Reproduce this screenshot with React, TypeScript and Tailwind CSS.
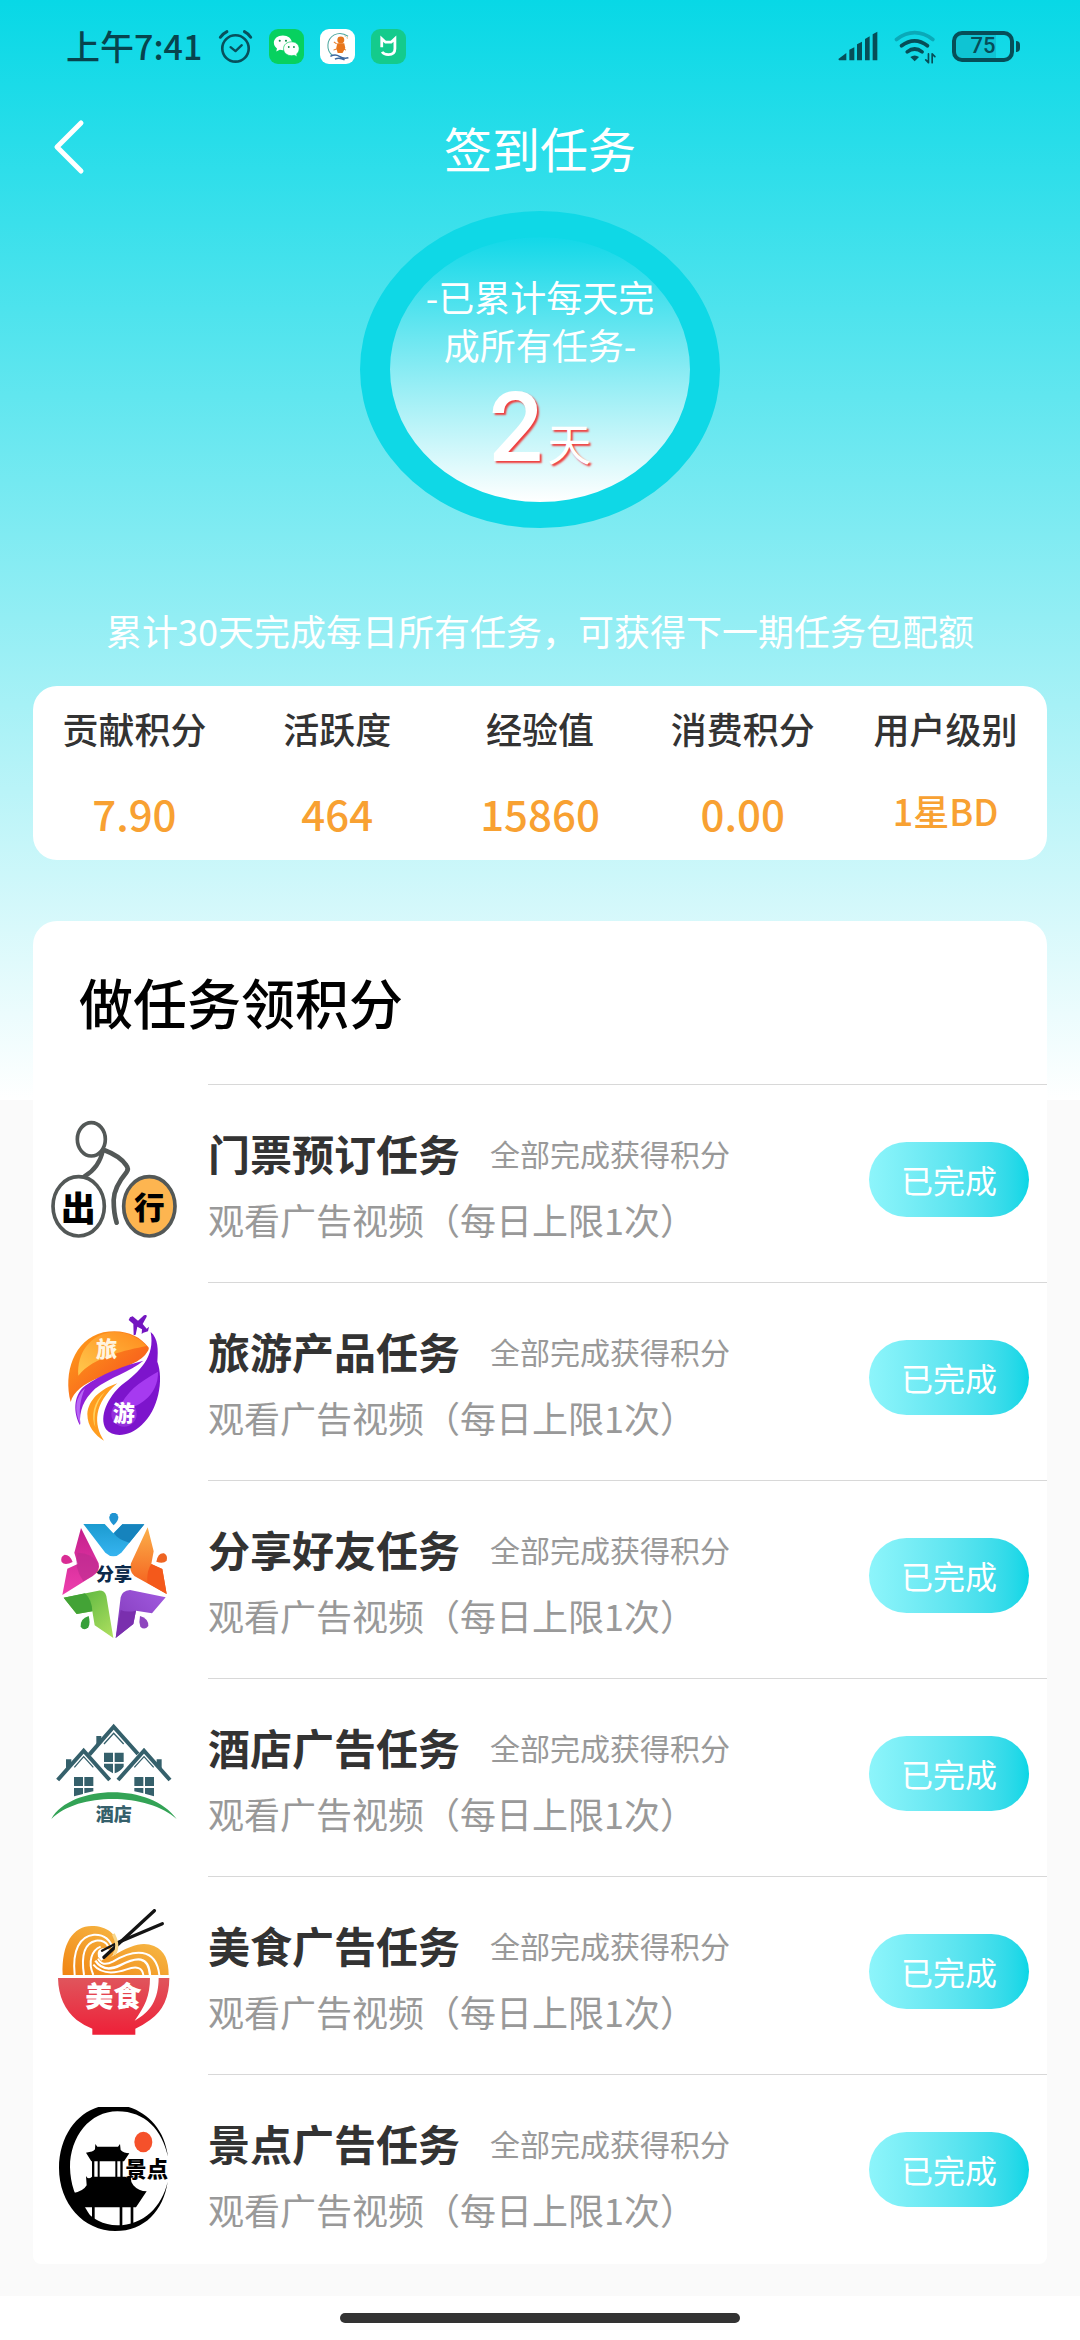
import type { ReactNode } from "react";

const SANS = "font-['Noto_Sans_CJK_SC','Noto_Sans',sans-serif]";

function AlarmIcon() {
  return (
    <svg viewBox="634 84 102 106" className="size-[35px]" fill="none" stroke="#07505c" strokeWidth="8" strokeLinecap="round">
      <circle cx="685" cy="143" r="40" />
      <path d="M670 139 L685 151 L704 133" strokeWidth="7" strokeLinejoin="round" />
      <path d="M639 109 Q647 98 659 92 M712 92 Q724 98 731 109" strokeWidth="9" />
    </svg>
  );
}

function WeChatIcon() {
  return (
    <svg viewBox="780 87 101 101" className="size-[35px]">
      <rect x="780" y="87" width="101" height="101" rx="26" fill="#07d15f" />
      <path d="M820 106c-15 0-26 9-26 21 0 7 4 12 9 16l-2 9 10-5q5 1 9 1c15 0 26-9 26-21s-11-21-26-21z" fill="#fff" />
      <path d="M845 124c-13 0-23 8-23 20s10 20 23 20q4 0 8-1l8 4-1-8c4-3 7-9 7-15 0-12-9-20-22-20z" fill="#fff" stroke="#07d15f" strokeWidth="2" />
      <g fill="#078a45">
        <circle cx="811" cy="121" r="3" />
        <circle cx="829" cy="121" r="3" />
        <circle cx="837" cy="139" r="2.6" />
        <circle cx="852" cy="139" r="2.6" />
      </g>
    </svg>
  );
}

function MascotIcon() {
  return (
    <svg viewBox="925 87 101 101" className="size-[35px]" fill="none">
      <rect x="925" y="87" width="101" height="101" rx="26" fill="#fff" />
      <path d="M962 164a36 36 0 0 1 4-60q20-10 40 4" stroke="#4da7a0" strokeWidth="3" />
      <path d="M996 106q8 5 10 12" stroke="#e0b070" strokeWidth="3" strokeDasharray="4 4" />
      <circle cx="985" cy="119" r="10" fill="#e8761c" />
      <path d="M975 128h20l3 14-8 14h-14l-4-14z" fill="#e8761c" />
      <path d="M965 124l8 6M1000 148l-8-4M964 148l10-4" stroke="#e8761c" strokeWidth="3" />
      <path d="M955 166q14-8 26 0t26 4M968 174q12-6 28 2" stroke="#38669e" strokeWidth="4" />
    </svg>
  );
}

function MiHomeIcon() {
  return (
    <svg viewBox="1071 87 101 101" className="size-[35px]" fill="none">
      <rect x="1071" y="87" width="101" height="101" rx="26" fill="#14cb8c" />
      <path d="M1102 140V115L1113 125H1129L1140 115V144Q1140 161 1121 161Q1108 161 1103 153" stroke="#fff" strokeWidth="8" />
    </svg>
  );
}

function SignalIcon() {
  return (
    <svg viewBox="864 92 118 90" className="h-[30px] w-10" fill="#064e58">
      <path d="M864 176L888 158V180H866zM897 148l15-7v39h-15zM920 132l15-8v56h-15zM944 116l14-8v72h-14zM967 102l14-8v86h-14z" />
    </svg>
  );
}

function WifiIcon() {
  return (
    <svg viewBox="1028 90 124 104" className="h-[35px] w-[42px]" fill="none" stroke="#064e58" strokeWidth="11" strokeLinecap="round">
      <path d="M1035 121Q1089 81 1143 121" stroke="#0aa9b8" />
      <path d="M1050 140Q1089 110 1127 140" />
      <path d="M1067 158Q1089 141 1111 158" />
      <path d="M1089 186l-13-13q13-9 26 0z" fill="#064e58" stroke="none" />
      <path d="M1130 164V190M1130 190l-8-8M1141 190V164M1141 164l8 8" strokeWidth="5" />
    </svg>
  );
}

function Battery() {
  return (
    <div className="flex items-center gap-[2px]">
      <div className="flex h-[31px] w-[62px] items-center justify-center rounded-[10px] border-4 border-[#064e58] bg-[linear-gradient(90deg,#0fc4d3_74%,transparent_74%)]">
        <span className="font-[Roboto,sans-serif] text-[22px] leading-none font-medium text-[#064e58]">75</span>
      </div>
      <div className="h-[11px] w-1 rounded-r-full bg-[#064e58]" />
    </div>
  );
}

const LOGO = "size-[126px] shrink-0";

function LogoText({ x, y, size, fill, children }: { x: number; y: number; size: number; fill: string; children: ReactNode }) {
  return (
    <text x={x} y={y} fontSize={size} fill={fill} textAnchor="middle" fontWeight="900" className={SANS}>
      {children}
    </text>
  );
}

function TravelLogo() {
  return (
    <svg viewBox="63 51 378 378" className={LOGO} fill="none" stroke="#535857" strokeWidth="11">
      <ellipse cx="184" cy="118" rx="42" ry="50" />
      <ellipse cx="146" cy="319" rx="77" ry="89" fill="#fff" />
      <ellipse cx="358" cy="319" rx="77" ry="89" fill="#fdb550" />
      <path d="M219 150Q207 205 163 229" strokeWidth="13" strokeLinecap="round" />
      <path d="M222 150Q270 168 289 196Q297 206 290 216Q252 262 251 300Q251 340 260 368" strokeWidth="14" strokeLinecap="round" strokeLinejoin="round" />
      <g stroke="none">
        <LogoText x={145} y={364} size={104} fill="#000">出</LogoText>
        <LogoText x={358} y={358} size={92} fill="#000">行</LogoText>
      </g>
    </svg>
  );
}

function TourLogo() {
  return (
    <svg viewBox="63 45 378 378" className={LOGO}>
      <defs>
        <linearGradient id="tour-o" x1="0" y1="0" x2="1" y2="1">
          <stop offset="0" stopColor="#ffa31a" />
          <stop offset="0.6" stopColor="#f96a1c" />
          <stop offset="1" stopColor="#f4581c" />
        </linearGradient>
        <linearGradient id="tour-y" x1="0" y1="1" x2="1" y2="0">
          <stop offset="0" stopColor="#ffc94d" />
          <stop offset="1" stopColor="#ff8a1c" />
        </linearGradient>
      </defs>
      <path d="M122 306C100 220 130 120 220 97C280 84 330 108 352 138Q362 144 350 158C330 190 270 205 210 232C160 252 130 276 122 306z" fill="url(#tour-o)" />
      <path d="M145 227C140 160 180 102 250 96C300 96 335 120 350 138C290 150 190 170 145 227z" fill="url(#tour-y)" />
      <path d="M362 96C385 115 385 150 382 185C402 240 385 330 335 375C300 410 250 414 228 388C205 350 235 290 275 255C330 215 376 170 362 96z" fill="#7d14cc" />
      <path d="M384 215C350 235 300 262 275 310C300 330 320 320 345 300C370 280 385 250 384 215z" fill="#a63af0" />
      <path d="M340 182C270 200 195 232 160 262C130 290 130 340 150 376C148 330 160 300 195 266C240 232 300 215 340 182z" fill="#8f1fd6" />
      <path d="M152 374C130 330 136 290 165 265C150 300 146 330 152 374z" fill="#b765f5" />
      <path d="M262 250C210 268 175 300 172 342C172 380 195 405 222 422C190 375 190 310 262 250z" fill="#ff9d1f" />
      <path d="M196 382C182 350 190 305 225 276C196 310 190 345 196 382z" fill="#ffd25e" />
      <path d="M300 52l8-3 16 13 18-16q9-4 8 4l-12 22 12 14 7-6-3 14-14 4-5 4 1-14-14-8-5 24-6 2-1-34-14-12z" fill="#7416c0" />
      <LogoText x={230} y={172} size={64} fill="#fff4e0">旅</LogoText>
      <circle cx="282" cy="342" r="38" fill="#a544e6" opacity="0.6" />
      <LogoText x={281} y={364} size={66} fill="#fff">游</LogoText>
    </svg>
  );
}

function ShareLogo() {
  return (
    <svg viewBox="63 39 378 378" className={LOGO}>
      <defs>
        <linearGradient id="share-b" x1="0" y1="0" x2="0" y2="1">
          <stop offset="0" stopColor="#1c9bd0" />
          <stop offset="1" stopColor="#36b4f0" />
        </linearGradient>
        <linearGradient id="share-g" x1="0" y1="0" x2="1" y2="1">
          <stop offset="0" stopColor="#4caf3a" />
          <stop offset="1" stopColor="#b0e060" />
        </linearGradient>
        <linearGradient id="share-v" x1="1" y1="0" x2="0" y2="1">
          <stop offset="0" stopColor="#a25be0" />
          <stop offset="1" stopColor="#8038b8" />
        </linearGradient>
        <linearGradient id="share-m" x1="0" y1="0" x2="0" y2="1">
          <stop offset="0" stopColor="#c41f8c" />
          <stop offset="1" stopColor="#ee3fae" />
        </linearGradient>
        <linearGradient id="share-r" x1="0" y1="0" x2="0" y2="1">
          <stop offset="0" stopColor="#fbb04a" />
          <stop offset="1" stopColor="#f4581a" />
        </linearGradient>
      </defs>
      <path d="M160 72H224L250 100L277 73H343L274 158Q250 180 226 158z" fill="url(#share-b)" />
      <path d="M277 73H343L298 128Q262 118 252 100z" fill="#1683bd" />
      <path d="M153 84L206 190Q212 214 188 228L97 285L112 206L143 192L133 158z" fill="url(#share-m)" />
      <path d="M143 158Q185 160 202 186Q212 212 188 228L160 244Q130 200 143 158z" fill="#b92b8e" opacity="0.6" />
      <path d="M353 82L371 154L364 192L397 207L410 282L313 228Q296 214 303 190z" fill="url(#share-r)" />
      <path d="M364 192L397 207L410 282L352 248Q350 210 364 192z" fill="#f4591b" />
      <path d="M101 293L205 272Q224 270 229 288L250 414L194 376L187 334L140 342z" fill="url(#share-g)" />
      <path d="M101 293L165 280Q186 300 187 334L140 342z" fill="#43a336" />
      <path d="M407 292L300 270Q276 272 272 292L257 414L310 372L318 332L366 340z" fill="url(#share-v)" />
      <path d="M272 330Q290 338 318 332L310 372L257 414z" fill="#7a2fae" />
      <path d="M251 76Q236 62 238 50Q242 38 251 38Q261 38 265 50Q266 62 251 76z" fill="#2094d2" />
      <path d="M128 186Q104 198 95 186Q90 170 104 164Q120 164 128 186z" fill="#d92c94" />
      <path d="M379 185Q384 158 402 160Q414 166 410 182Q400 192 379 185z" fill="#ee6422" />
      <path d="M176 348Q150 356 152 380Q162 394 175 382Q182 370 176 348z" fill="#37a03a" />
      <path d="M330 348Q356 356 355 378Q344 392 331 380Q326 366 330 348z" fill="#8e46be" />
      <LogoText x={252} y={242} size={54} fill="#0c2a4a">分享</LogoText>
    </svg>
  );
}

function HotelLogo() {
  return (
    <svg viewBox="63 33 378 378" className={LOGO}>
      <g fill="none" stroke="#35606b" strokeWidth="12">
        <path d="M178 164L251 80L324 162" />
        <path d="M83 240L161 152L239 240" />
        <path d="M264 240L342 152L420 240" />
        <path d="M222 132L251 100L281 132M133 202L161 170L190 202M313 202L342 170L371 202" strokeWidth="4" />
      </g>
      <path d="M199 108H214V124L199 142zM108 178H124V196L108 212zM380 178H395V212L380 196z" fill="#35606b" />
      <g fill="#35606b">
        <path d="M222 158h27v28h-27zM254 158h27v28h-27zM222 191h27v29q-18-8-27-20zM254 191h27v9q-10 14-27 20z" />
        <path d="M132 231h27v27h-27zM163 231h27v27h-27zM132 264h27v18l-27 7zM163 264h27v10l-27 6z" />
        <path d="M313 231h27v27h-27zM345 231h27v27h-27zM313 264h27v16l-27-6zM345 264h27v25l-27-8z" />
      </g>
      <path d="M64 357C120 255 360 245 440 357C360 282 150 272 64 357z" fill="#33a356" />
      <LogoText x={251} y={362} size={54} fill="#35606b">酒店</LogoText>
    </svg>
  );
}

function FoodLogo() {
  return (
    <svg viewBox="63 57 378 378" className={LOGO}>
      <defs>
        <linearGradient id="food-bowl" x1="0" y1="0" x2="0" y2="1">
          <stop offset="0" stopColor="#e0555c" />
          <stop offset="1" stopColor="#ee2038" />
        </linearGradient>
        <linearGradient id="food-noodle" x1="0" y1="1" x2="1" y2="0">
          <stop offset="0" stopColor="#f08412" />
          <stop offset="1" stopColor="#f8c552" />
        </linearGradient>
      </defs>
      <path d="M98 255C94 160 130 108 185 108C230 108 262 132 262 168C258 186 252 196 238 204C310 160 340 156 372 168C405 182 416 212 416 255z" fill="url(#food-noodle)" />
      <g fill="none" stroke="#fff" strokeWidth="6">
        <path d="M134 255C126 180 150 138 192 134Q236 132 250 178" />
        <path d="M162 255C152 190 168 158 198 152Q224 150 234 168" />
        <path d="M190 255C172 214 186 180 212 170" />
        <path d="M204 206Q216 232 250 214C310 178 378 170 388 255" />
        <path d="M196 212Q222 250 270 226C320 200 356 196 360 255" strokeWidth="7" />
        <path d="M190 224Q222 262 290 238Q336 222 340 255" />
      </g>
      <path d="M204 200Q198 176 222 174L242 180Q236 200 214 212z" fill="#fff" />
      <path d="M84 264H418Q418 350 360 390Q340 405 316 416V434H187V416Q164 408 140 390Q86 345 84 264z" fill="url(#food-bowl)" />
      <path d="M360 262H386C386 330 360 368 314 392C344 350 360 320 360 262z" fill="#fff" />
      <g stroke="#141414" strokeLinecap="round" strokeWidth="10">
        <path d="M373 62L222 202" />
        <path d="M397 101L262 158" />
        <path d="M262 158L216 182" strokeWidth="7" />
      </g>
      <path d="M250 132Q270 170 252 194" fill="none" stroke="#f8d68a" strokeWidth="9" />
      <LogoText x={250} y={352} size={84} fill="#fff">美食</LogoText>
    </svg>
  );
}

function SceneryLogo() {
  return (
    <svg viewBox="63 51 378 378" className={LOGO}>
      <path d="M205 51H296C356 70 404 120 414 200C396 120 346 64 262 64C180 64 120 140 120 232C122 330 180 406 262 406C340 406 396 350 413 275C400 362 344 423 256 423C160 423 87 340 87 234C87 140 140 70 205 51z" fill="#000" />
      <path d="M196 162l6 8h62l6-8 2 18q10 10 26 10l-16 24H184l-16-26q22-2 27-10z" fill="#000" />
      <path d="M186 212h7v50h-7zM203 212h6v50h-6zM256 212h6v50h-6zM271 212h7v50h-7z" fill="#000" />
      <path d="M168 258q6 12 18 2h100q12 10 16 0 0 16 8 26 16 18 40 18l-32 48H160L128 310q32-6 42-24z" fill="#000" />
      <path d="M120 290L165 352L194 400Q140 370 120 290z" fill="#000" />
      <path d="M186 350h8v54h-8zM269 350h8v58h-8zM302 350h8v52h-8z" fill="#000" />
      <ellipse cx="340" cy="156" rx="27" ry="31" fill="#f5512b" />
      <LogoText x={350} y={261} size={64} fill="#000">景点</LogoText>
    </svg>
  );
}

const STATS = [
  { label: "贡献积分", value: "7.90" },
  { label: "活跃度", value: "464" },
  { label: "经验值", value: "15860" },
  { label: "消费积分", value: "0.00" },
  { label: "用户级别", value: "1星BD", small: true },
];

const TASKS = [
  { name: "门票预订任务", Logo: TravelLogo },
  { name: "旅游产品任务", Logo: TourLogo },
  { name: "分享好友任务", Logo: ShareLogo },
  { name: "酒店广告任务", Logo: HotelLogo },
  { name: "美食广告任务", Logo: FoodLogo },
  { name: "景点广告任务", Logo: SceneryLogo },
];

function StatusBar() {
  return (
    <div className="flex h-[92px] items-center justify-between pr-[60px] pl-[66px]">
      <div className="flex items-center gap-4">
        <span className="text-[34px] leading-[48px] font-medium text-[#07444e]">上午7:41</span>
        <AlarmIcon />
        <WeChatIcon />
        <MascotIcon />
        <MiHomeIcon />
      </div>
      <div className="flex items-center gap-4">
        <SignalIcon />
        <WifiIcon />
        <Battery />
      </div>
    </div>
  );
}

export default function App() {
  return (
    <div className={`${SANS} min-h-screen bg-white`}>
      <div className="bg-[#fafafa] bg-[linear-gradient(180deg,#08d8e6,#ffffff)] bg-[length:100%_1100px] bg-no-repeat pb-8">
        <StatusBar />
        <header className="grid h-[110px] grid-cols-[1fr_auto_1fr] items-center px-[52px]">
          <button type="button" aria-label="返回" className="w-[34px]">
            <svg viewBox="0 0 34 56" className="h-14 w-[34px]" fill="none" stroke="#fff" strokeWidth="5" strokeLinecap="round" strokeLinejoin="round">
              <path d="M29 4L5 28L29 52" />
            </svg>
          </button>
          <h1 className="text-5xl leading-[64px] text-white">签到任务</h1>
          <span />
        </header>

        <section className="mx-auto mt-[9px] flex h-[317px] w-[360px] flex-col items-center rounded-[50%] border-x-[30px] border-y-[26px] border-[#0fd8e6] bg-[linear-gradient(180deg,#12d8e8,#ffffff)] bg-origin-padding pt-[35px] text-white">
          <p className="w-60 text-center text-[36px] leading-[48px]">-已累计每天完成所有任务-</p>
          <p className="mt-3 flex items-baseline gap-1 leading-[96px] [text-shadow:2px_2px_2px_#f03c3c]">
            <span className="font-[Roboto,sans-serif] text-[96px] font-medium">2</span>
            <span className="text-[44px]">天</span>
          </p>
        </section>

        <p className="mt-[75px] text-center text-[36px] leading-[54px] text-white">
          累计30天完成每日所有任务，可获得下一期任务包配额
        </p>

        <section className="mx-[33px] mt-[29px] grid h-[174px] grid-cols-5 rounded-3xl bg-white pt-[15px] text-center">
          {STATS.map((s) => (
            <div key={s.label}>
              <p className="text-[36px] leading-[54px] font-medium text-[#333]">{s.label}</p>
              <p className={`mt-7 font-medium text-[#f8a132] ${s.small ? "text-[36px] leading-[54px]" : "text-[42px] leading-[60px]"}`}>{s.value}</p>
            </div>
          ))}
        </section>

        <section className="mx-[33px] mt-[61px] rounded-t-3xl rounded-b-lg bg-white">
          <h2 className="px-[46px] pt-[41px] pb-[42px] text-[54px] leading-[80px] font-medium text-black">做任务领积分</h2>
          <ul>
            {TASKS.map(({ name, Logo }) => (
              <li key={name} className="flex gap-[31px] pb-2 pl-[18px] last:pb-0">
                <div className="pt-[33px]">
                  <Logo />
                </div>
                <div className="flex h-[190px] flex-1 items-center justify-between border-t border-[#d8d8d8] pr-[18px]">
                  <div className="pt-2">
                    <div className="flex items-center gap-[30px]">
                      <h3 className="text-[42px] leading-[62px] font-bold text-[#333]">{name}</h3>
                      <span className="text-[30px] leading-[44px] text-[#999]">全部完成获得积分</span>
                    </div>
                    <p className="mt-2 text-[36px] leading-[54px] text-[#999]">观看广告视频（每日上限1次）</p>
                  </div>
                  <button type="button" className="h-[75px] w-40 rounded-full bg-linear-to-r from-[#8df5fb] to-[#06d6e6] pb-[2px] text-[32px] text-white">
                    已完成
                  </button>
                </div>
              </li>
            ))}
          </ul>
        </section>
      </div>
      <div className="flex h-11 items-center justify-center">
        <div className="h-[10px] w-[37%] rounded-full bg-[#333]" />
      </div>
    </div>
  );
}
